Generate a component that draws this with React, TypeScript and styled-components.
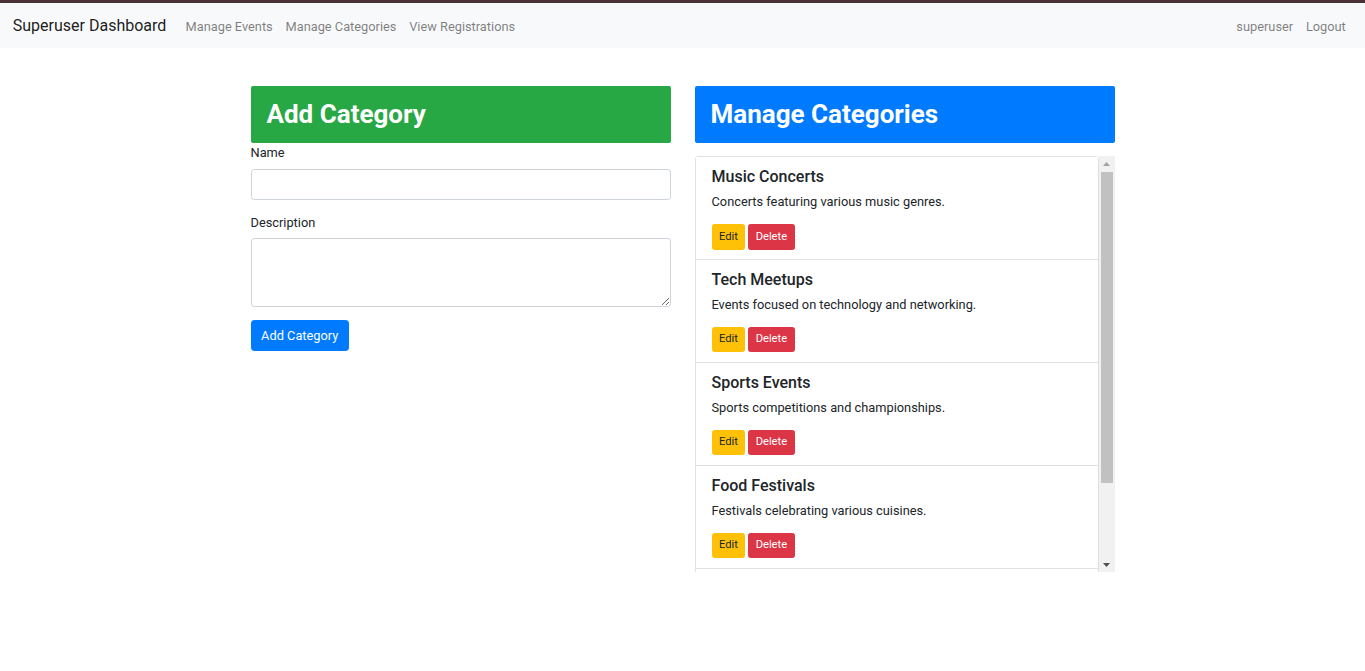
import React, { useLayoutEffect, useRef, useState } from "react";
import styled, { createGlobalStyle } from "styled-components";

const GlobalStyle = createGlobalStyle`
  *, *::before, *::after { box-sizing: border-box; }
  html, body { margin: 0; padding: 0; background: #fff; }
  body {
    font-family: Roboto, "Liberation Sans", Arial, sans-serif;
    font-size: 12.8px;
    line-height: 1.5;
    color: #212529;
  }
`;

const Page = styled.div`
  border-top: 3px solid #4a3236;
  min-height: 668px;
`;

const Navbar = styled.nav`
  display: flex;
  align-items: center;
  background: #f8f9fa;
  padding: 7.2px 12.8px 5.6px;
`;

const Brand = styled.a`
  font-size: 16px;
  line-height: 24px;
  padding: 4px 0;
  margin-right: 12.8px;
  color: rgba(0, 0, 0, 0.9);
  text-decoration: none;
  white-space: nowrap;
`;

const NavList = styled.div<{ $end?: boolean }>`
  display: flex;
  align-items: center;
  margin-left: ${(p) => (p.$end ? "auto" : "0")};
`;

const NavLink = styled.a`
  padding: 6.4px;
  line-height: 19.2px;
  color: rgba(0, 0, 0, 0.5);
  text-decoration: none;
  white-space: nowrap;
`;

const Container = styled.main`
  width: 864px;
  margin: 38.4px auto 0;
  display: grid;
  grid-template-columns: 420px 420px;
  column-gap: 24px;
  align-items: start;
`;

const Column = styled.section`
  display: flex;
  flex-direction: column;
`;

const PanelTitle = styled.h2<{ $tone: "green" | "blue"; $spaced?: boolean }>`
  margin: 0 0 ${(p) => (p.$spaced ? "12.8px" : "0")};
  padding: 13px 16px;
  font-size: 26px;
  font-weight: 700;
  line-height: 1.2;
  color: #fff;
  border-radius: 2px;
  background: ${(p) => (p.$tone === "green" ? "#28a745" : "#007bff")};
`;

const FormGroup = styled.div`
  display: flex;
  flex-direction: column;
  margin-bottom: 12.8px;
`;

const Label = styled.label`
  display: block;
  margin-bottom: 6.4px;
  line-height: 19.2px;
`;

const Input = styled.input`
  display: block;
  width: 100%;
  height: 30.8px;
  padding: 4.8px 9.6px;
  font: inherit;
  color: #495057;
  background: #fff;
  border: 1px solid #ced4da;
  border-radius: 3.2px;
  outline: none;
`;

const TextArea = styled.textarea`
  display: block;
  width: 100%;
  height: 69.2px;
  padding: 4.8px 9.6px;
  font: inherit;
  color: #495057;
  background: #fff;
  border: 1px solid #ced4da;
  border-radius: 3.2px;
  resize: vertical;
  outline: none;
`;

const PrimaryButton = styled.button`
  align-self: flex-start;
  padding: 4.8px 9.6px;
  font: inherit;
  line-height: 19.2px;
  color: #fff;
  background: #007bff;
  border: 1px solid #007bff;
  border-radius: 3.2px;
  cursor: pointer;
`;

const ScrollFrame = styled.div`
  display: flex;
  height: 416px;
`;

const Viewport = styled.div`
  flex: 1;
  min-width: 0;
  overflow-y: auto;
  scrollbar-width: none;
  &::-webkit-scrollbar { display: none; }
`;

const ScrollBar = styled.div`
  width: 16px;
  flex: none;
  display: flex;
  flex-direction: column;
  background: #f1f1f1;
`;

const ArrowButton = styled.div`
  height: 15px;
  flex: none;
  display: flex;
  align-items: center;
  justify-content: center;
`;

const Track = styled.div`
  flex: 1;
  display: flex;
  flex-direction: column;
  padding: 0 2px;
`;

const Thumb = styled.div`
  flex: none;
  background: #c1c1c1;
`;

const ListGroup = styled.ul`
  list-style: none;
  margin: 0;
  padding: 0;
  border: 1px solid rgba(0, 0, 0, 0.125);
  border-radius: 3.2px;
`;

const ListItem = styled.li`
  padding: 9.6px 16px;
  background: #fff;
  & + & {
    border-top: 1px solid rgba(0, 0, 0, 0.125);
  }
`;

const ItemTitle = styled.h5`
  margin: 0 0 6.4px;
  font-size: 16px;
  font-weight: 500;
  line-height: 1.2;
  color: #212529;
`;

const ItemText = styled.p`
  margin: 0 0 12.8px;
  line-height: 19.2px;
`;

const Actions = styled.div`
  display: flex;
  gap: 3px;
`;

const SmallButton = styled.button<{ $variant: "warning" | "danger" }>`
  padding: 3.2px 6.4px;
  font: inherit;
  font-size: 11.2px;
  line-height: 16.8px;
  border-radius: 2.4px;
  cursor: pointer;
  color: ${(p) => (p.$variant === "warning" ? "#212529" : "#fff")};
  background: ${(p) => (p.$variant === "warning" ? "#ffc107" : "#dc3545")};
  border: 1px solid ${(p) => (p.$variant === "warning" ? "#ffc107" : "#dc3545")};
`;

const categories = [
  { name: "Music Concerts", description: "Concerts featuring various music genres." },
  { name: "Tech Meetups", description: "Events focused on technology and networking." },
  { name: "Sports Events", description: "Sports competitions and championships." },
  { name: "Food Festivals", description: "Festivals celebrating various cuisines." },
  { name: "Art Exhibitions", description: "Exhibitions showcasing local and international art." },
];

function Arrow({ up, color }: { up?: boolean; color: string }) {
  return (
    <svg width="7" height="4" viewBox="0 0 7 4">
      <polygon points={up ? "3.5,0 7,4 0,4" : "0,0 7,0 3.5,4"} fill={color} />
    </svg>
  );
}

function ScrollList({ children }: { children: React.ReactNode }) {
  const ref = useRef<HTMLDivElement>(null);
  const [m, setM] = useState({ top: 0, client: 1, scroll: 1 });
  const update = () => {
    const el = ref.current;
    if (el) setM({ top: el.scrollTop, client: el.clientHeight, scroll: el.scrollHeight });
  };
  useLayoutEffect(update, []);
  const trackLen = 416 - 30;
  const ratio = m.client / m.scroll;
  const thumbH = Math.max(20, trackLen * ratio);
  const offset = 1 + (m.scroll > m.client ? (m.top / (m.scroll - m.client)) * (trackLen - thumbH - 1) : 0);
  const atTop = m.top <= 0;
  const atBottom = m.top >= m.scroll - m.client - 1;
  return (
    <ScrollFrame>
      <Viewport ref={ref} onScroll={update}>{children}</Viewport>
      <ScrollBar>
        <ArrowButton><Arrow up color={atTop ? "#a3a3a3" : "#505050"} /></ArrowButton>
        <Track>
          <Thumb style={{ height: thumbH, marginTop: offset }} />
        </Track>
        <ArrowButton><Arrow color={atBottom ? "#a3a3a3" : "#505050"} /></ArrowButton>
      </ScrollBar>
    </ScrollFrame>
  );
}

export default function App() {
  return (
    <>
      <GlobalStyle />
      <Page>
        <Navbar>
          <Brand href="#">Superuser Dashboard</Brand>
          <NavList>
            <NavLink href="#">Manage Events</NavLink>
            <NavLink href="#">Manage Categories</NavLink>
            <NavLink href="#">View Registrations</NavLink>
          </NavList>
          <NavList $end>
            <NavLink href="#">superuser</NavLink>
            <NavLink href="#">Logout</NavLink>
          </NavList>
        </Navbar>
        <Container>
          <Column>
            <PanelTitle $tone="green">Add Category</PanelTitle>
            <FormGroup>
              <Label htmlFor="name">Name</Label>
              <Input id="name" type="text" />
            </FormGroup>
            <FormGroup>
              <Label htmlFor="description">Description</Label>
              <TextArea id="description" rows={3} />
            </FormGroup>
            <PrimaryButton type="button">Add Category</PrimaryButton>
          </Column>
          <Column>
            <PanelTitle $tone="blue" $spaced>Manage Categories</PanelTitle>
            <ScrollList>
              <ListGroup>
                {categories.map((c) => (
                  <ListItem key={c.name}>
                    <ItemTitle>{c.name}</ItemTitle>
                    <ItemText>{c.description}</ItemText>
                    <Actions>
                      <SmallButton $variant="warning" type="button">Edit</SmallButton>
                      <SmallButton $variant="danger" type="button">Delete</SmallButton>
                    </Actions>
                  </ListItem>
                ))}
              </ListGroup>
            </ScrollList>
          </Column>
        </Container>
      </Page>
    </>
  );
}
